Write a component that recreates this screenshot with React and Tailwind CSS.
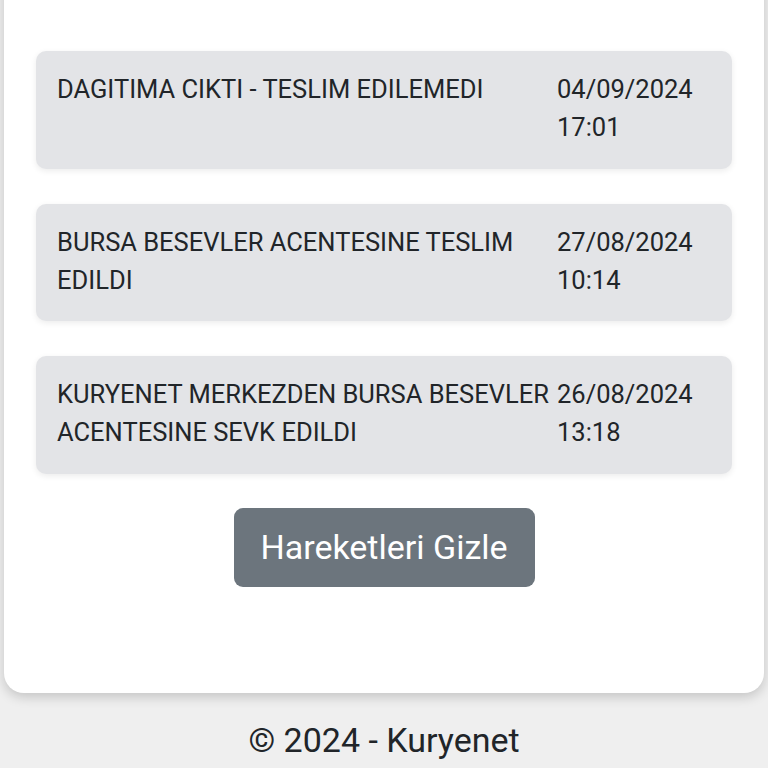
const MOVES = [
  { text: 'DAGITIMA CIKTI - TESLIM EDILEMEDI', date: '04/09/2024', time: '17:01' },
  { text: 'BURSA BESEVLER ACENTESINE TESLIM EDILDI', date: '27/08/2024', time: '10:14' },
  { text: 'KURYENET MERKEZDEN BURSA BESEVLER ACENTESINE SEVK EDILDI', date: '26/08/2024', time: '13:18' },
]

export default function App() {
  return (
    <div className="min-h-[768px] bg-[#efefef] font-['Roboto',sans-serif] text-[#212529] overflow-hidden">
      {/* Main card (top is scrolled off) */}
      <div className="mx-[4px] -mt-[20px] bg-white rounded-b-[20px] shadow-[0_4px_12px_rgba(0,0,0,0.18)] pt-[71px] pb-[106px] px-[32px]">
        <div className="flex flex-col gap-[35px]">
          {MOVES.map((m) => (
            <div
              key={m.date}
              className="flex bg-[#e3e4e7] rounded-[10px] shadow-[0_2px_6px_rgba(0,0,0,0.08)] pl-[21px] pr-[21px] pt-[19px] pb-[22.5px] text-[25.5px] leading-[38px]"
            >
              <div className="w-[500px] shrink-0">{m.text}</div>
              <div className="flex-1">
                <div>{m.date}</div>
                <div>{m.time}</div>
              </div>
            </div>
          ))}
        </div>
        <div className="flex justify-center mt-[34px]">
          <button className="w-[301px] h-[79px] bg-[#6c757d] text-white text-[34px] rounded-[9px]">
            Hareketleri Gizle
          </button>
        </div>
      </div>
      <footer className="text-center text-[34px] leading-[40px] pt-[27px]">
        © 2024 - Kuryenet
      </footer>
    </div>
  )
}
